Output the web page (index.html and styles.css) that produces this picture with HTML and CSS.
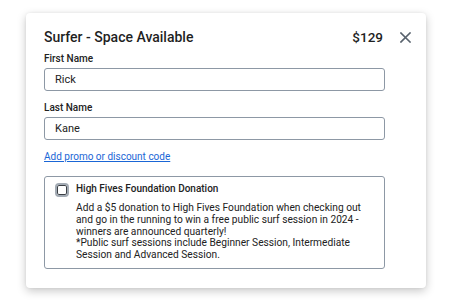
FILE: index.html
```html
<!DOCTYPE html>
<html>
<head>
<meta charset="utf-8">
<link rel="stylesheet" href="styles.css">
</head>
<body>
<div class="modal">
  <div class="header">
    <h2 class="title">Surfer - Space Available</h2>
    <span class="price">$129</span>
    <button class="close" aria-label="Close">
      <svg width="11" height="11" viewBox="0 0 11 11"><path d="M1 1L10 10M10 1L1 10" stroke="#58626d" stroke-width="1.6" stroke-linecap="square"/></svg>
    </button>
  </div>
  <label class="label">First Name</label>
  <div class="input">Rick</div>
  <label class="label">Last Name</label>
  <div class="input">Kane</div>
  <a class="promo" href="#">Add promo or discount code</a>
  <div class="donation">
    <span class="checkbox"></span>
    <div class="don-body">
      <div class="don-title">High Fives Foundation Donation</div>
      <p class="don-text">Add a $5 donation to High Fives Foundation when checking out and go in the running to win a free public surf session in 2024 - winners are announced quarterly!<br>*Public surf sessions include Beginner Session, Intermediate Session and Advanced Session.</p>
    </div>
  </div>
</div>
</body>
</html>
```

FILE: styles.css
```css
* { box-sizing: border-box; }
html, body { margin: 0; padding: 0; background: #ffffff; }
body {
  font-family: Roboto, "Liberation Sans", sans-serif;
  color: #222;
  padding: 13px 25px 18px 26px;
}
.modal {
  width: 400px;
  height: 275px;
  background: #fff;
  border-radius: 4px;
  box-shadow: 0 3px 10px rgba(0,0,0,0.22), 0 0 3px rgba(0,0,0,0.06);
  padding: 14px 15px 0 18px;
  display: flex;
  flex-direction: column;
}
.header {
  display: flex;
  align-items: center;
  height: 20px;
  margin-bottom: 6px;
}
.title {
  margin: 0;
  font-size: 14px;
  font-weight: 500;
  line-height: 20px;
  color: #1f1f1f;
  flex: 1;
}
.price {
  font-size: 13.5px;
  font-weight: 500;
  color: #1f1f1f;
  margin-right: 17px;
}
.close {
  border: 0;
  background: none;
  padding: 0;
  width: 11px;
  height: 11px;
  display: flex;
}
.label {
  font-size: 10px;
  font-weight: 500;
  color: #222;
  line-height: 12px;
  margin-bottom: 3px;
}
.input {
  width: 341px;
  height: 23px;
  border: 1px solid #8d98a5;
  border-radius: 3px;
  font-size: 11px;
  line-height: 21px;
  padding-left: 10px;
  color: #222;
  margin-bottom: 11px;
}
.promo {
  font-size: 10px;
  color: #1a66d6;
  text-decoration: underline;
  line-height: 12px;
  margin-bottom: 13px;
  align-self: flex-start;
}
.donation {
  width: 341px;
  height: 93px;
  border: 1px solid #8d98a5;
  border-radius: 3px;
  display: flex;
  padding: 5px 10px 0 10px;
  gap: 7px;
}
.checkbox {
  flex: none;
  width: 14px;
  height: 14px;
  border: 2px solid #a3abb4;
  border-radius: 4px;
  box-shadow: inset 0 0 0 1px #3c4045;
  background: #fff;
  margin-top: 1px;
}
.don-title {
  font-size: 10px;
  font-weight: 500;
  line-height: 14px;
  color: #222;
  margin-bottom: 6px;
}
.don-text {
  margin: 0;
  font-size: 10.2px;
  line-height: 11.75px;
  color: #222;
  width: 300px;
}
```
